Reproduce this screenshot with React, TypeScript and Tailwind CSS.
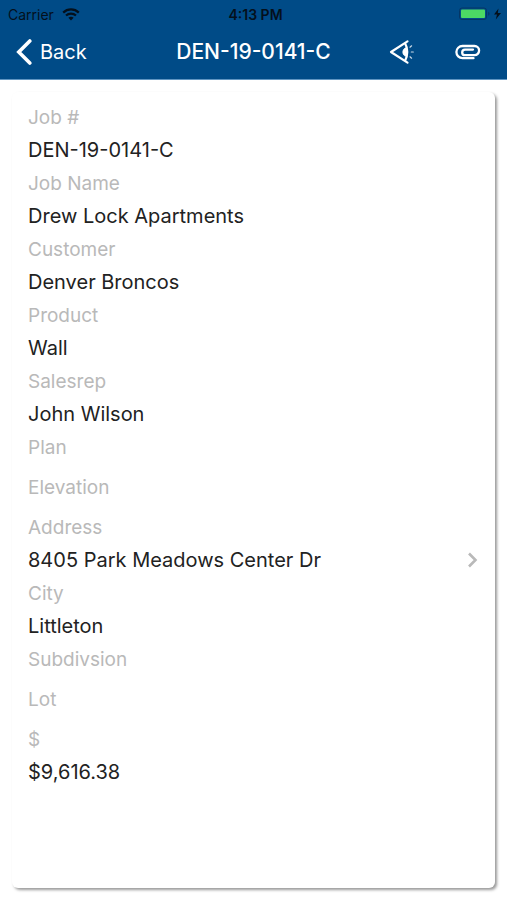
type Field = { label: string; value?: string; link?: boolean };

const fields: Field[] = [
  { label: "Job #", value: "DEN-19-0141-C" },
  { label: "Job Name", value: "Drew Lock Apartments" },
  { label: "Customer", value: "Denver Broncos" },
  { label: "Product", value: "Wall" },
  { label: "Salesrep", value: "John Wilson" },
  { label: "Plan" },
  { label: "Elevation" },
  { label: "Address", value: "8405 Park Meadows Center Dr", link: true },
  { label: "City", value: "Littleton" },
  { label: "Subdivsion" },
  { label: "Lot" },
  { label: "$", value: "$9,616.38" },
];

function WifiIcon() {
  return (
    <svg width="18" height="13" viewBox="0 0 18 13" fill="none" stroke="currentColor" strokeWidth="2.2" aria-hidden="true">
      <path d="M1.2 4.6C5.6.4 12.4.4 16.8 4.6" />
      <path d="M4 7.5c2.8-2.6 7.2-2.6 10 0" />
      <path d="M9 12.4 6.4 9.8c1.5-1.3 3.7-1.3 5.2 0z" fill="currentColor" stroke="none" />
    </svg>
  );
}

function BatteryIcon() {
  return (
    <svg width="44" height="14" viewBox="0 0 44 14" aria-hidden="true">
      <rect x="0.5" y="1" width="27" height="11.5" rx="2.5" fill="none" stroke="#053665" />
      <rect x="2" y="2.5" width="24" height="8.5" rx="1" fill="#4cd964" />
      <path d="M29.2 4.8v4c1.8-.6 1.8-3.4 0-4z" fill="#053665" />
      <path d="M39.5 1.5 35 7.6h3l-1.2 4.8 5.2-6.4h-3.2z" fill="#04101c" />
    </svg>
  );
}

function ViewIcon() {
  return (
    <svg width="26" height="26" viewBox="0 0 26 26" fill="none" stroke="currentColor" strokeLinecap="round" strokeLinejoin="round" aria-hidden="true">
      <path d="M18.5 2.3 2 13l16.5 10.7" strokeWidth="2.2" />
      <path d="M16.2 4.6c2.8 4.8 2.8 12 0 16.8" strokeWidth="2.1" />
      <path d="M17.2 8.8c-4.5.5-4.5 8 0 8.5 1.3-2.7 1.3-5.8 0-8.5z" fill="currentColor" strokeWidth="0.8" />
      <path d="m21 8.2 1.6-1.4M22.3 13h2M21 17.8l1.6 1.4" strokeWidth="1.2" strokeOpacity="0.8" />
    </svg>
  );
}

function ClipIcon() {
  return (
    <svg width="26" height="16" viewBox="0 0 26 16" fill="none" stroke="currentColor" strokeWidth="2.3" strokeLinecap="round" aria-hidden="true">
      <path d="M18.5 14.2H7.5a6.1 6.1 0 0 1 0-12.2h12a4.6 4.6 0 0 1 0 9.2H10a2.8 2.8 0 0 1 0-5.6h8" />
    </svg>
  );
}

export default function App() {
  return (
    <div className="flex min-h-screen flex-col bg-white font-['Inter','Liberation_Sans',sans-serif]">
      <header className="border-b border-[#5f95c2] bg-[#004b87]">
        <div className="grid h-7 grid-cols-3 items-center pr-1 pl-2 text-[14px] text-[#04101c]">
          <div className="flex items-center gap-2">
            <span>Carrier</span>
            <WifiIcon />
          </div>
          <span className="text-center font-semibold">4:13 PM</span>
          <div className="flex justify-end">
            <BatteryIcon />
          </div>
        </div>
        <div className="grid h-[51px] grid-cols-[1fr_auto_1fr] items-center px-4 pb-1 text-[20px] text-white">
          <button type="button" className="flex items-center gap-2 justify-self-start">
            <svg width="16" height="26" viewBox="0 0 16 26" fill="none" stroke="currentColor" strokeWidth="3.6" strokeLinecap="round" aria-hidden="true">
              <path d="M13.8 2 2.8 13l11 11" />
            </svg>
            Back
          </button>
          <h1 className="text-[21px] font-medium">DEN-19-0141-C</h1>
          <div className="flex items-center justify-end gap-10 pr-2.5">
            <button type="button" aria-label="View">
              <ViewIcon />
            </button>
            <button type="button" aria-label="Attachments">
              <ClipIcon />
            </button>
          </div>
        </div>
      </header>
      <main className="flex flex-1 flex-col px-3 pt-3 pb-3">
        <dl className="flex-1 rounded-md bg-white px-4 pt-3.5 pb-4 text-[20px] leading-6 shadow-[2px_2px_3px_0px_rgba(0,0,0,0.4)]">
          {fields.map(({ label, value, link }) => (
            <div key={label} className={value ? "pb-2.5" : "pb-4"}>
              <dt className="text-[19px] leading-6 text-[#b9b9b9]">{label}</dt>
              {value && (
                <dd className="mt-2 text-[#222222]">
                  {link ? (
                    <a href="#address" className="flex items-center justify-between">
                      {value}
                      <svg width="12" height="16" viewBox="0 0 12 16" fill="none" stroke="#b9b9b9" strokeWidth="2.6" aria-hidden="true">
                        <path d="m2 1.5 6.5 6.5L2 14.5" />
                      </svg>
                    </a>
                  ) : (
                    value
                  )}
                </dd>
              )}
            </div>
          ))}
        </dl>
      </main>
    </div>
  );
}
